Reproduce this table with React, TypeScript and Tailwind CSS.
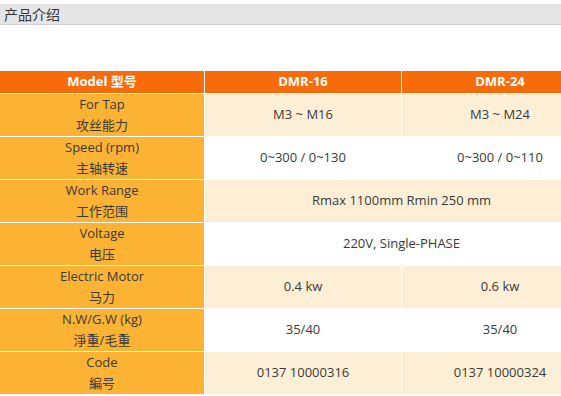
import React from "react";

type Row = { en: string; zh: string; a: string; b?: string; cream: boolean };

const rows: Row[] = [
  { en: "For Tap", zh: "攻丝能力", a: "M3 ~ M16", b: "M3 ~ M24", cream: true },
  { en: "Speed (rpm)", zh: "主轴转速", a: "0~300 / 0~130", b: "0~300 / 0~110", cream: false },
  { en: "Work Range", zh: "工作范围", a: "Rmax 1100mm Rmin 250 mm", cream: true },
  { en: "Voltage", zh: "电压", a: "220V, Single-PHASE", cream: false },
  { en: "Electric Motor", zh: "马力", a: "0.4 kw", b: "0.6 kw", cream: true },
  { en: "N.W/G.W (kg)", zh: "淨重/毛重", a: "35/40", b: "35/40", cream: false },
  { en: "Code", zh: "編号", a: "0137 10000316", b: "0137 10000324", cream: true },
];

const font = { fontFamily: '"Open Sans", "Noto Sans CJK SC", sans-serif' };

export default function App() {
  return (
    <div className="w-[561px] h-[396px] overflow-hidden bg-white pt-[4px]" style={font}>
      <div className="h-[21px] bg-[#e5e5e5] border-b border-[#d0d0d0] px-[4px] text-[14px] leading-[20px] text-[#333]" style={{ fontFamily: '"Noto Sans CJK SC", sans-serif' }}>
        产品介绍
      </div>
      <div className="mt-[46px] grid w-[598px] grid-cols-[204px_196px_196px] gap-px bg-white text-[13px] text-[#3a3a3a]">
        <div className="h-[22px] bg-[#f76b0a] flex items-center justify-center font-bold text-white">Model 型号</div>
        <div className="h-[22px] bg-[#f76b0a] flex items-center justify-center font-bold text-white">DMR-16</div>
        <div className="h-[22px] bg-[#f76b0a] flex items-center justify-center font-bold text-white">DMR-24</div>
        {rows.map((r) => (
          <React.Fragment key={r.en}>
            <div className="h-[42px] bg-[#fcb233] flex flex-col items-center justify-center leading-[21px]">
              <span>{r.en}</span>
              <span>{r.zh}</span>
            </div>
            {r.b === undefined ? (
              <div className={`col-span-2 h-[42px] flex items-center justify-center ${r.cream ? "bg-[#fdefd6]" : "bg-white"}`}>
                {r.a}
              </div>
            ) : (
              <>
                <div className={`h-[42px] flex items-center justify-center ${r.cream ? "bg-[#fdefd6]" : "bg-white"}`}>{r.a}</div>
                <div className={`h-[42px] flex items-center justify-center ${r.cream ? "bg-[#fdefd6]" : "bg-white"}`}>{r.b}</div>
              </>
            )}
          </React.Fragment>
        ))}
      </div>
    </div>
  );
}
